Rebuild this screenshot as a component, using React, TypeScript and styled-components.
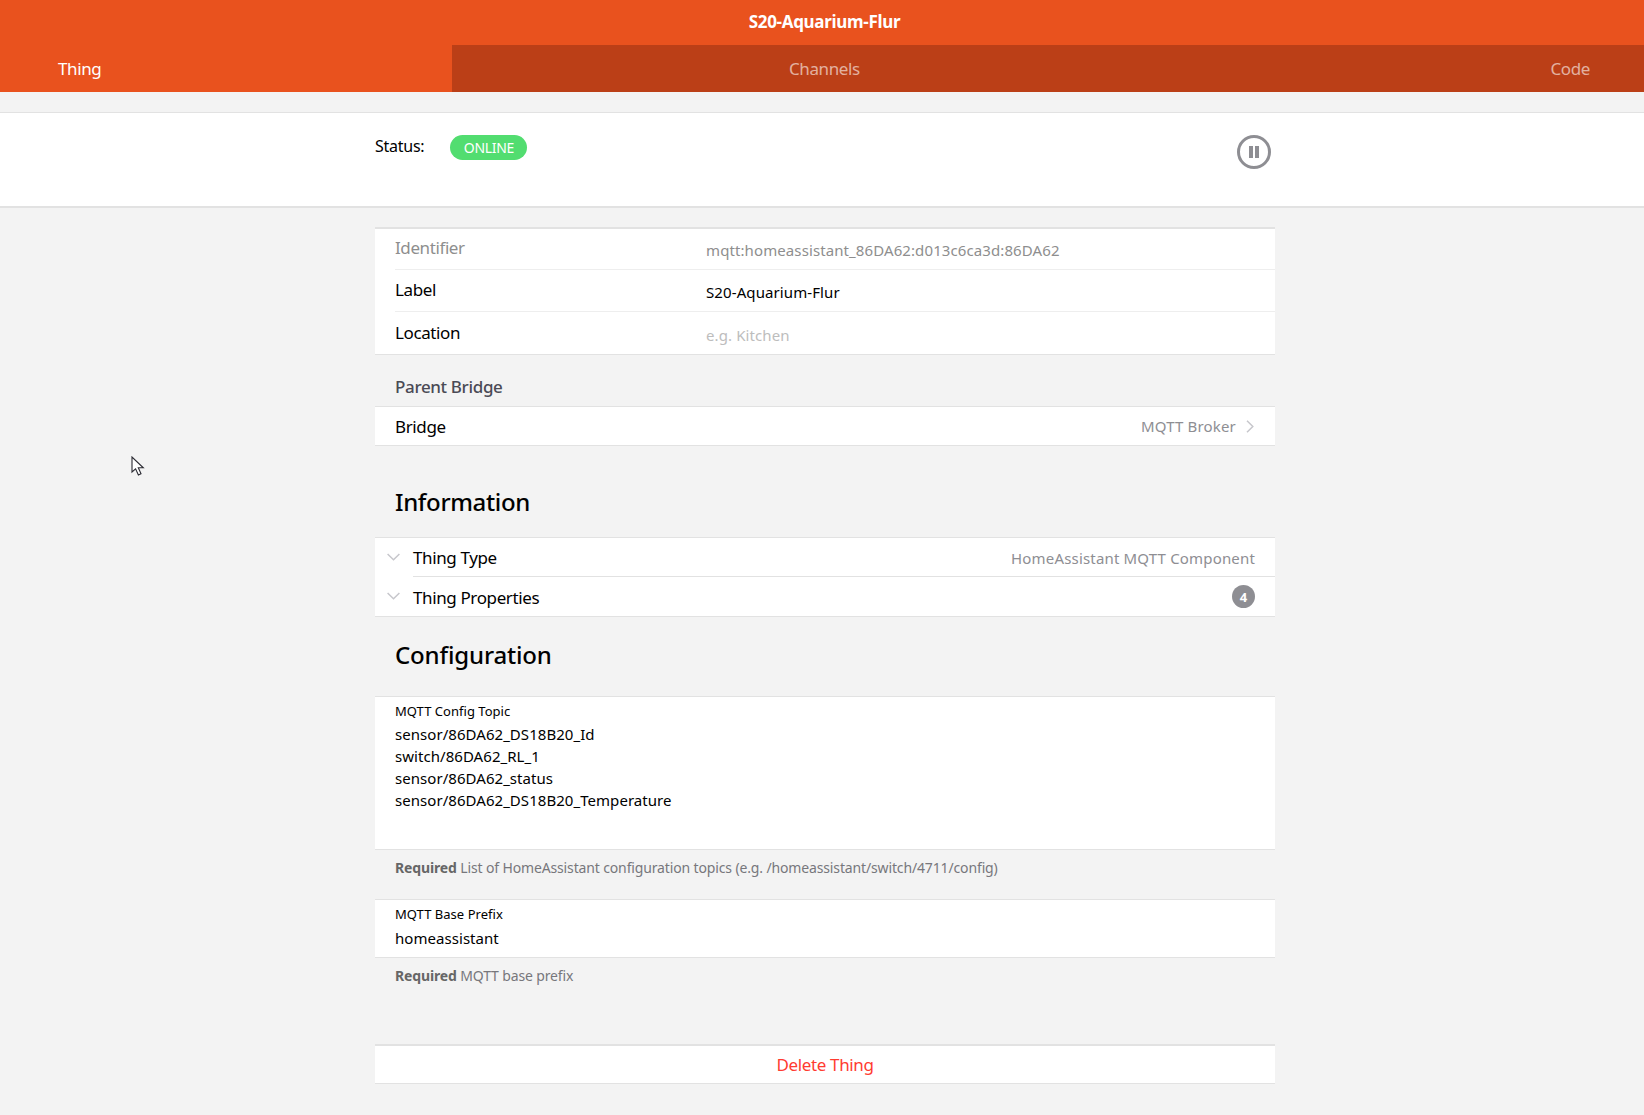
import React from 'react';
import styled, { createGlobalStyle } from 'styled-components';

const Global = createGlobalStyle`
  html, body { margin: 0; padding: 0; background: #f3f3f3; overflow: hidden; }
  body { font-family: "Noto Sans", "Open Sans", "Liberation Sans", sans-serif; color: #000; }
  * { box-sizing: border-box; }
`;
const Page = styled.div`position: relative; width: 1644px; height: 1115px; overflow: hidden; background: #f3f3f3;`;
const Header = styled.header`background: #e9521e; color: #fff;`;
const Title = styled.h1`margin: 0; height: 45px; padding: 0 0 2px 5px; display: flex; align-items: center; justify-content: center; font-size: 17px; font-weight: 700; letter-spacing: -0.3px;`;
const Tabs = styled.nav`display: flex; height: 47px;`;
const ActiveTab = styled.div`width: 452px; padding: 0 0 1px 58px; display: flex; align-items: center; font-size: 17px; letter-spacing: -0.4px;`;
const InactiveTabs = styled.div`flex: 1; background: #bb3f17; color: rgba(255,255,255,.6); padding: 0 54px 1px 337px; display: flex; align-items: center; justify-content: space-between; font-size: 17px; letter-spacing: -0.4px;`;
const StatusBand = styled.section`margin-top: 20px; height: 96px; background: #fff; border-top: 1px solid #e2e2e2; border-bottom: 2px solid #e2e2e2;`;
const Column = styled.div`width: 900px; margin-left: 375px;`;
const StatusRow = styled(Column)`display: flex; justify-content: space-between; padding: 22px 4px 0 0;`;
const StatusLeft = styled.div`display: flex; align-items: flex-start; gap: 26px;`;
const StatusLabel = styled.span`font-size: 16px; line-height: 22px; letter-spacing: -0.25px;`;
const OnlinePill = styled.span`width: 77px; height: 25px; border-radius: 13px; background: #52dd70; color: #fff; font-size: 14px; display: flex; align-items: center; justify-content: center; letter-spacing: -0.3px;`;
const List = styled.div<{ $thick?: boolean }>`background: #fff; border-top: ${p => (p.$thick ? 2 : 1)}px solid #e2e2e2; border-bottom: 1px solid #e2e2e2;`;
const FormRow = styled.div<{ $h: number; $shift?: number; $last?: boolean }>`margin-left: 20px; height: ${p => p.$h}px; padding-top: ${p => p.$shift ?? 0}px; display: flex; border-bottom: ${p => (p.$last ? 'none' : '1px solid #eee')};`;
const FormLabel = styled.span<{ $muted?: boolean }>`width: 311px; font-size: 17px; line-height: 38px; letter-spacing: -0.4px; color: ${p => (p.$muted ? '#8e8e8e' : '#000')};`;
const FormValue = styled.span<{ $tone?: string }>`font-size: 15px; line-height: 42px; letter-spacing: 0.1px; color: ${p => p.$tone ?? '#000'};`;
const Caption = styled.div`height: 51px; padding: 0 0 8px 20px; display: flex; align-items: flex-end; font-size: 17px; font-weight: 500; color: #4a4a55; letter-spacing: -0.35px;`;
const BridgeRow = styled.div`height: 38px; padding: 0 21px 0 20px; display: flex; align-items: center; justify-content: space-between;`;
const RowTitle = styled.span<{ $drop?: number }>`padding-top: ${p => p.$drop ?? 0}px; font-size: 17px; letter-spacing: -0.38px;`;
const RowMeta = styled.span<{ $drop?: number }>`padding-top: ${p => p.$drop ?? 0}px; display: flex; align-items: center; gap: 10px; font-size: 15px; color: #8e8e93; letter-spacing: 0.17px;`;
const Heading = styled.h2<{ $h: number; $pt: number; $ls: number }>`margin: 0; height: ${p => p.$h}px; padding: ${p => p.$pt}px 0 0 20px; font-size: 24px; font-weight: 500; line-height: 36px; letter-spacing: ${p => p.$ls}px;`;
const AccordionRow = styled.div`height: 39px; display: flex; align-items: center;`;
const ChevronCell = styled.span`width: 38px; height: 100%; padding: 15px 0 0 12px; display: flex; align-items: flex-start;`;
const AccordionInner = styled.div<{ $divider?: boolean }>`flex: 1; height: 100%; padding-right: 20px; display: flex; align-items: center; justify-content: space-between; border-bottom: ${p => (p.$divider ? '1px solid #e2e2e2' : 'none')};`;
const Badge = styled.span`width: 23px; height: 23px; border-radius: 50%; background: #8e8e93; color: #fff; font-size: 13px; font-weight: 700; display: flex; align-items: center; justify-content: center;`;
const Field = styled.div<{ $h: number }>`height: ${p => p.$h}px; padding: 5px 20px 0; background: #fff;`;
const FieldLabel = styled.div`font-size: 13px; line-height: 18px; letter-spacing: 0.03px;`;
const FieldLines = styled.div<{ $mt: number }>`margin-top: ${p => p.$mt}px; font-size: 15px; line-height: 22px; letter-spacing: 0.05px;`;
const Hint = styled.p<{ $h: number }>`margin: 0; height: ${p => p.$h}px; padding: 8px 0 0 20px; font-size: 14px; line-height: 20px; color: #77777c; letter-spacing: -0.14px;`;
const HintStrong = styled.strong`color: #666; font-weight: 700;`;
const DeleteRow = styled.div`height: 40px; background: #fff; border-top: 2px solid #e2e2e2; border-bottom: 1px solid #e2e2e2; display: flex; align-items: center; justify-content: center; font-size: 17px; color: #ff3b30; letter-spacing: -0.35px;`;
const Cursor = styled.svg`position: absolute; left: 131px; top: 456px;`;
const Content = styled(Column)`margin-top: 19px;`;

const Pause = () => (
  <svg width="34" height="34" viewBox="0 0 34 34">
    <circle cx="17" cy="17" r="15.5" fill="none" stroke="#8e8e93" strokeWidth="3" />
    <rect x="12" y="11" width="4" height="12" fill="#8e8e93" />
    <rect x="18" y="11" width="4" height="12" fill="#8e8e93" />
  </svg>
);
const Right = () => (
  <svg width="8" height="13" viewBox="0 0 8 13"><path d="M1 .8 6.8 6.5 1 12.2" fill="none" stroke="#c7c7cc" strokeWidth="1.5" /></svg>
);
const Down = () => (
  <svg width="13" height="8" viewBox="0 0 13 8"><path d="M.6 1 6.5 6.8 12.4 1" fill="none" stroke="#c7c7cc" strokeWidth="1.5" /></svg>
);

export default function App() {
  return (
    <Page>
      <Global />
      <Header>
        <Title>S20-Aquarium-Flur</Title>
        <Tabs>
          <ActiveTab>Thing</ActiveTab>
          <InactiveTabs><span>Channels</span><span>Code</span></InactiveTabs>
        </Tabs>
      </Header>
      <StatusBand>
        <StatusRow>
          <StatusLeft>
            <StatusLabel>Status:</StatusLabel>
            <OnlinePill>ONLINE</OnlinePill>
          </StatusLeft>
          <Pause />
        </StatusRow>
      </StatusBand>
      <Content>
        <List $thick>
          <FormRow $h={41}><FormLabel $muted>Identifier</FormLabel><FormValue $tone="#8e8e8e">mqtt:homeassistant_86DA62:d013c6ca3d:86DA62</FormValue></FormRow>
          <FormRow $h={42} $shift={1}><FormLabel>Label</FormLabel><FormValue>S20-Aquarium-Flur</FormValue></FormRow>
          <FormRow $h={42} $shift={2} $last><FormLabel>Location</FormLabel><FormValue $tone="#bdbdbd">e.g. Kitchen</FormValue></FormRow>
        </List>
        <Caption>Parent Bridge</Caption>
        <List>
          <BridgeRow><RowTitle>Bridge</RowTitle><RowMeta>MQTT Broker <Right /></RowMeta></BridgeRow>
        </List>
        <Heading $h={91} $pt={38} $ls={-0.35}>Information</Heading>
        <List>
          <AccordionRow><ChevronCell><Down /></ChevronCell><AccordionInner $divider><RowTitle>Thing Type</RowTitle><RowMeta $drop={2}>HomeAssistant MQTT Component</RowMeta></AccordionInner></AccordionRow>
          <AccordionRow><ChevronCell><Down /></ChevronCell><AccordionInner><RowTitle $drop={2}>Thing Properties</RowTitle><Badge>4</Badge></AccordionInner></AccordionRow>
        </List>
        <Heading $h={79} $pt={20} $ls={-0.15}>Configuration</Heading>
        <List>
          <Field $h={152}>
            <FieldLabel>MQTT Config Topic</FieldLabel>
            <FieldLines $mt={3}>sensor/86DA62_DS18B20_Id<br />switch/86DA62_RL_1<br />sensor/86DA62_status<br />sensor/86DA62_DS18B20_Temperature</FieldLines>
          </Field>
        </List>
        <Hint $h={49}><HintStrong>Required</HintStrong> List of HomeAssistant configuration topics (e.g. /homeassistant/switch/4711/config)</Hint>
        <List>
          <Field $h={57}>
            <FieldLabel>MQTT Base Prefix</FieldLabel>
            <FieldLines $mt={4}>homeassistant</FieldLines>
          </Field>
        </List>
        <Hint $h={86}><HintStrong>Required</HintStrong> MQTT base prefix</Hint>
        <DeleteRow>Delete Thing</DeleteRow>
      </Content>
      <Cursor width="14" height="22" viewBox="0 0 14 22">
        <path d="M1 1v15l3.6-3.2L7.4 19l2.6-1.2-2.7-6h5L1 1z" fill="#fff" stroke="#2b2b33" strokeWidth="1.1" />
      </Cursor>
    </Page>
  );
}
